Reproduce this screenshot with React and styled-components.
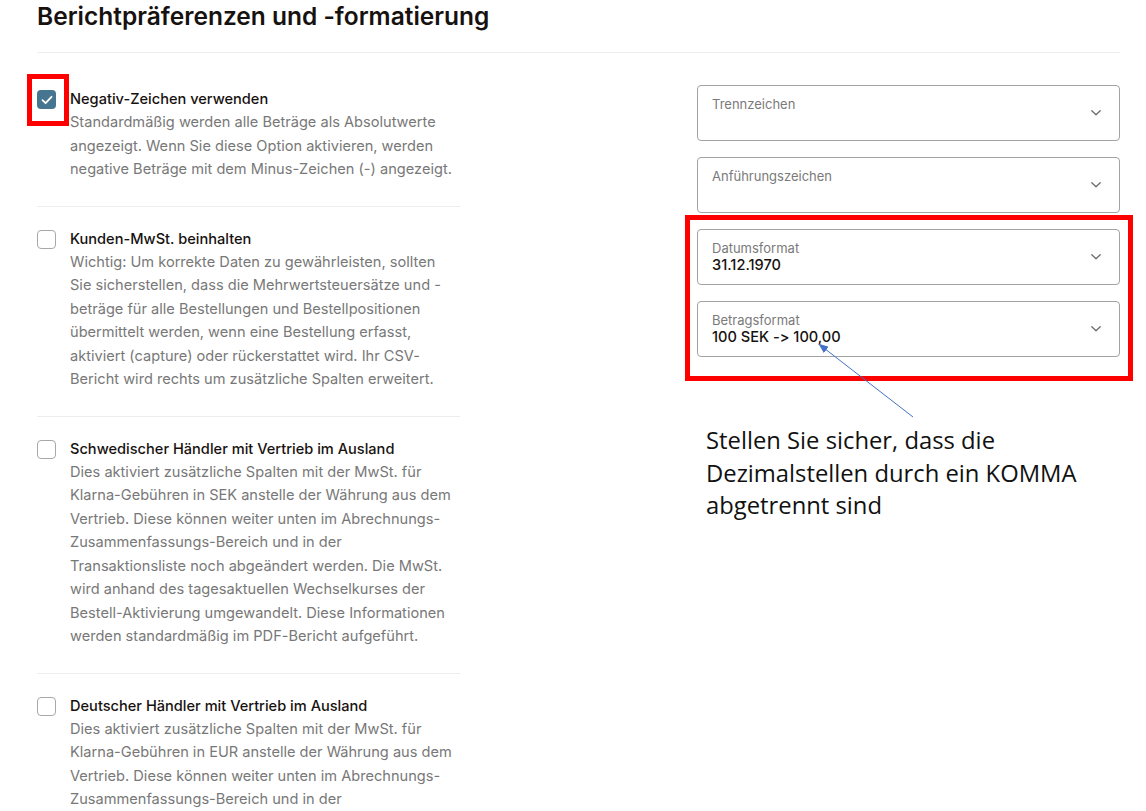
import React from "react";
import styled, { createGlobalStyle } from "styled-components";

const GlobalStyle = createGlobalStyle`
  html, body {
    margin: 0;
    padding: 0;
    background: #fff;
  }
  body {
    font-family: Inter, "Noto Sans", sans-serif;
    font-feature-settings: "calt" 0;
    color: #17120f;
  }
`;

const options = [
  {
    title: "Negativ-Zeichen verwenden",
    checked: true,
    marked: true,
    text:
      "Standardmäßig werden alle Beträge als Absolutwerte angezeigt. Wenn Sie diese Option aktivieren, werden negative Beträge mit dem Minus-Zeichen (-) angezeigt.",
  },
  {
    title: "Kunden-MwSt. beinhalten",
    text:
      "Wichtig: Um korrekte Daten zu gewährleisten, sollten Sie sicherstellen, dass die Mehrwertsteuersätze und -beträge für alle Bestellungen und Bestellpositionen übermittelt werden, wenn eine Bestellung erfasst, aktiviert (capture) oder rückerstattet wird. Ihr CSV-Bericht wird rechts um zusätzliche Spalten erweitert.",
  },
  {
    title: "Schwedischer Händler mit Vertrieb im Ausland",
    text:
      "Dies aktiviert zusätzliche Spalten mit der MwSt. für Klarna-Gebühren in SEK anstelle der Währung aus dem Vertrieb. Diese können weiter unten im Abrechnungs-Zusammenfassungs-Bereich und in der Transaktionsliste noch abgeändert werden. Die MwSt. wird anhand des tagesaktuellen Wechselkurses der Bestell-Aktivierung umgewandelt. Diese Informationen werden standardmäßig im PDF-Bericht aufgeführt.",
  },
  {
    title: "Deutscher Händler mit Vertrieb im Ausland",
    text:
      "Dies aktiviert zusätzliche Spalten mit der MwSt. für Klarna-Gebühren in EUR anstelle der Währung aus dem Vertrieb. Diese können weiter unten im Abrechnungs-Zusammenfassungs-Bereich und in der Transaktionsliste noch abgeändert werden.",
  },
];

const Chevron = () => (
  <svg width="12" height="8" viewBox="0 0 12 8" fill="none">
    <path d="M1.8 1.8 6 5.8 10.2 1.8" stroke="#707070" strokeWidth="1.4" strokeLinecap="round" strokeLinejoin="round" />
  </svg>
);

const Select = ({ label, value }) => (
  <SelectBox>
    <SelectText>
      <SelectLabel>{label}</SelectLabel>
      {value && <SelectValue>{value}</SelectValue>}
    </SelectText>
    <ChevronWrap>
      <Chevron />
    </ChevronWrap>
  </SelectBox>
);

const App = () => (
  <Page>
    <GlobalStyle />
    <Title>Berichtpräferenzen und -formatierung</Title>
    <Divider />
    <Columns>
      <OptionList>
        {options.map((o, i) => (
          <Option key={i} last={i === options.length - 1}>
            <BoxSlot marked={o.marked}>
              <CheckBox checked={o.checked}>
                {o.checked && (
                  <svg width="12" height="10" viewBox="0 0 12 10" fill="none">
                    <path d="M1.5 5.2 4.6 8.2 10.5 1.8" stroke="#fff" strokeWidth="1.8" strokeLinecap="round" strokeLinejoin="round" />
                  </svg>
                )}
              </CheckBox>
            </BoxSlot>
            <OptionBody>
              <OptionTitle>{o.title}</OptionTitle>
              <OptionText>{o.text}</OptionText>
            </OptionBody>
          </Option>
        ))}
      </OptionList>
      <SelectColumn>
        <Select label="Trennzeichen" />
        <Select label="Anführungszeichen" />
        <Highlight>
          <Select label="Datumsformat" value="31.12.1970" />
          <Select label="Betragsformat" value="100 SEK -> 100,00" />
        </Highlight>
        <Note>
          Stellen Sie sicher, dass die
          <br />
          Dezimalstellen durch ein KOMMA
          <br />
          abgetrennt sind
        </Note>
        <Arrow width="110" height="90" viewBox="0 0 110 90">
          <defs>
            <marker id="head" markerWidth="10" markerHeight="8" refX="8" refY="4" orient="auto" markerUnits="userSpaceOnUse">
              <path d="M0 0 10 4 0 8Z" fill="#4472c4" />
            </marker>
          </defs>
          <line x1="101" y1="82" x2="8" y2="10" stroke="#4472c4" strokeWidth="1" markerEnd="url(#head)" />
        </Arrow>
      </SelectColumn>
    </Columns>
  </Page>
);

export default App;

const Page = styled.div`
  padding: 0 26px 0 37px;
  height: 811px;
  overflow: hidden;
`;

const Title = styled.h1`
  margin: 0;
  padding-top: 1px;
  font-size: 24.5px;
  line-height: 30px;
  font-weight: 600;
  color: #17120f;
`;

const Divider = styled.div`
  height: 1px;
  background: #ededed;
  margin-top: 21px;
`;

const Columns = styled.div`
  display: flex;
  justify-content: space-between;
  align-items: flex-start;
`;

const OptionList = styled.div`
  width: 423px;
  padding-top: 23px;
`;

const Option = styled.div`
  display: flex;
  gap: 14px;
  padding: 13px 0 24px;
  margin-bottom: 9px;
  border-bottom: ${(p) => (p.last ? "none" : "1px solid #ededed")};
`;

const BoxSlot = styled.div`
  position: relative;
  flex: none;
  padding-top: 1px;

  ${(p) =>
    p.marked &&
    `
    &::before {
      content: "";
      position: absolute;
      left: -10px;
      top: -15px;
      width: 32px;
      height: 42px;
      border: 5px solid #ff0000;
    }
  `}
`;

const CheckBox = styled.div`
  width: 19px;
  height: 19px;
  box-sizing: border-box;
  border-radius: 4px;
  display: flex;
  align-items: center;
  justify-content: center;
  background: ${(p) => (p.checked ? "#46758f" : "#fff")};
  border: ${(p) => (p.checked ? "none" : "1.5px solid #a8a8a8")};
`;

const OptionBody = styled.div`
  flex: 1;
  margin-right: 2px;
`;

const OptionTitle = styled.div`
  font-size: 14.6px;
  line-height: 20px;
  font-weight: 500;
  color: #17120f;
`;

const OptionText = styled.div`
  margin-top: 2px;
  font-size: 14.6px;
  line-height: 23.5px;
  color: #787878;
`;

const SelectColumn = styled.div`
  position: relative;
  width: 423px;
  padding-top: 32px;
  display: flex;
  flex-direction: column;
  gap: 16px;
`;

const Highlight = styled.div`
  position: relative;
  display: flex;
  flex-direction: column;
  gap: 16px;

  &::before {
    content: "";
    position: absolute;
    left: -12px;
    right: -13px;
    top: -14px;
    bottom: -24px;
    border: 5px solid #ff0000;
    pointer-events: none;
  }
`;

const SelectBox = styled.div`
  height: 56px;
  box-sizing: border-box;
  border: 1px solid #a3a3a3;
  border-radius: 4px;
  background: #fff;
  display: flex;
  align-items: center;
  padding: 0 17px 0 14px;
`;

const SelectText = styled.div`
  flex: 1;
  align-self: flex-start;
  padding-top: 10px;
`;

const SelectLabel = styled.div`
  font-size: 13px;
  line-height: 16px;
  color: #7a7a7a;
`;

const SelectValue = styled.div`
  font-size: 14.6px;
  line-height: 18px;
  font-weight: 500;
  color: #17120f;
`;

const ChevronWrap = styled.div`
  display: flex;
  align-items: center;
`;

const Note = styled.div`
  margin-top: 51px;
  padding-left: 9px;
  font-family: "Open Sans", "Noto Sans", sans-serif;
  font-size: 23.8px;
  line-height: 32.5px;
  color: #111;
`;

const Arrow = styled.svg`
  position: absolute;
  left: 115px;
  top: 282px;
  overflow: visible;
`;
